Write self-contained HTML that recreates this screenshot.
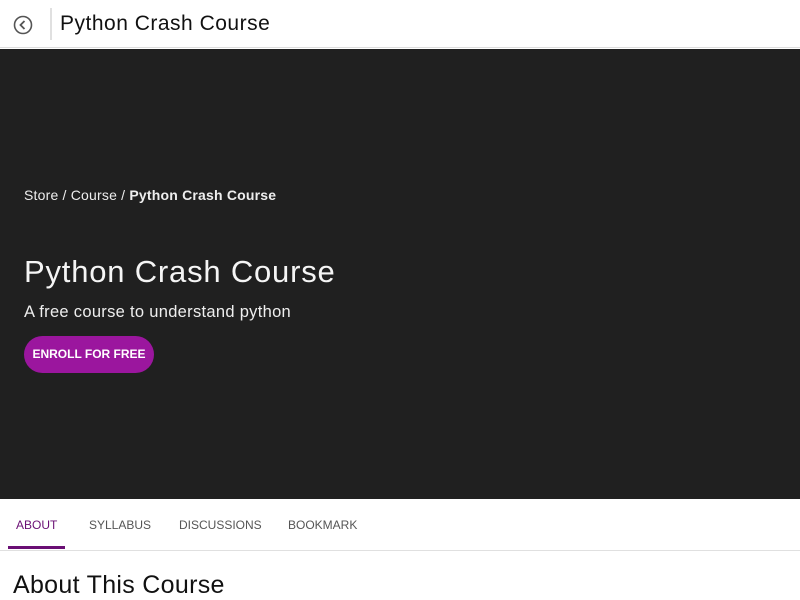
<!DOCTYPE html>
<html><head><meta charset="utf-8"><style>
*{margin:0;padding:0;box-sizing:border-box}
body{width:800px;height:600px;overflow:hidden;background:#fff;font-family:"Liberation Sans",sans-serif;position:relative}
.top{height:48px;border-bottom:1px solid #ddd;position:relative}
.sep{position:absolute;left:50px;top:8px;width:2px;height:32px;background:#e0e0e0}
.title{position:absolute;left:60px;top:12px;font-size:21px;color:#111;letter-spacing:0.5px}
.hero{position:absolute;top:49px;left:0;width:800px;height:450px;background:#202020;color:#fff}
.bc{position:absolute;left:24px;top:138px;font-size:14px;color:#eee;letter-spacing:0.2px}
.h1{position:absolute;left:24px;top:205px;font-size:31px;color:#f5f5f5;letter-spacing:0.8px}
.sub{position:absolute;left:24px;top:254px;font-size:16.5px;color:#eee;letter-spacing:0.3px}
.btn{position:absolute;left:24px;top:287px;width:130px;height:37px;border-radius:19px;background:#9b169e;color:#fff;font-weight:bold;font-size:12px;line-height:37px;text-align:center}
.tabs{position:absolute;top:499px;left:0;width:800px;height:52px;border-bottom:1px solid #e0e0e0}
.tab{position:absolute;top:19px;font-size:12px;color:#555}
.ul{position:absolute;left:8px;top:47px;width:57px;height:3px;background:#6a0f74}
.about{position:absolute;left:13px;top:571px;font-size:25px;color:#111;letter-spacing:0.3px}
</style></head><body>
<div class="top">
<svg style="position:absolute;left:13px;top:15px" width="20" height="20" viewBox="0 0 20 20"><circle cx="10" cy="10" r="8.5" fill="none" stroke="#555" stroke-width="1.6"/><path d="M11.5 6 L7.5 10 L11.5 14" fill="none" stroke="#555" stroke-width="1.8"/></svg>
<div class="sep"></div>
<div class="title">Python Crash Course</div>
</div>
<div class="hero">
<div class="bc">Store / Course / <b>Python Crash Course</b></div>
<div class="h1">Python Crash Course</div>
<div class="sub">A free course to understand python</div>
<div class="btn">ENROLL FOR FREE</div>
</div>
<div class="tabs">
<div class="tab" style="left:16px;color:#6a0f74">ABOUT</div>
<div class="tab" style="left:89px">SYLLABUS</div>
<div class="tab" style="left:179px">DISCUSSIONS</div>
<div class="tab" style="left:288px">BOOKMARK</div>
<div class="ul"></div>
</div>
<div class="about">About This Course</div>
</body></html>
